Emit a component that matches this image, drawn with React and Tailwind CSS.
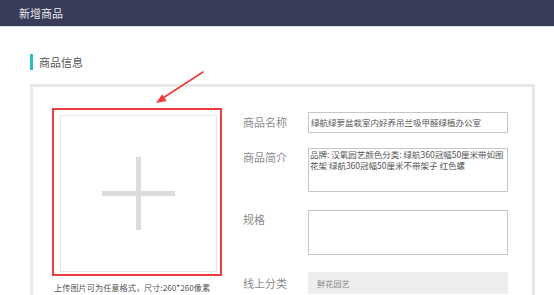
import React from "react";

const font = "font-['Noto_Sans_CJK_SC','Microsoft_YaHei',sans-serif]";

function Field({ label, children, labelLeading, className = "" }) {
  return (
    <div className={`flex items-start ${className}`}>
      <span className={`w-[65px] shrink-0 text-[11px] text-[#8c8c8c] ${labelLeading}`}>{label}</span>
      {children}
    </div>
  );
}

export default function App() {
  return (
    <div className={`relative h-[295px] overflow-hidden bg-white ${font}`}>
      <header className="flex h-[27px] items-center border-b border-[#d9dbe0] bg-[#383c58] pl-[19px] text-[11px] text-[#e8e9ee]">
        新增商品
      </header>

      <div className="px-[30px] pt-[27px]">
        <div className="flex h-[16px] items-center">
          <span className="h-[16px] w-[3px] bg-[#27bfc1]" />
          <span className="ml-[6px] text-[11px] leading-[16px] text-[#555]">商品信息</span>
        </div>

        <div className="mt-[14px] h-[240px] w-[505px] border-[3px] border-b-0 border-[#e8e8e8]">
          <div className="flex pl-[19px] pt-[21px]">
            <div className="w-[170px] shrink-0">
              <div className="h-[168px] w-[170px] border-2 border-[#f23c3c] pl-[6px] pt-[5px]">
                <div className="flex h-[157px] w-[157px] items-center justify-center border border-[#e6e6e6]">
                  <svg width="73" height="73" viewBox="0 0 73 73">
                    <rect x="0" y="34" width="73" height="5" fill="#dcdcdc" />
                    <rect x="34" y="0" width="5" height="73" fill="#dcdcdc" />
                  </svg>
                </div>
              </div>
              <p className="mt-[5px] whitespace-nowrap pl-[2px] text-[8.2px] leading-[12px] text-[#555]">
                上传图片可为任意格式，尺寸:260*260像素
              </p>
            </div>

            <div className="ml-[21px] flex flex-col pt-[4px]">
              <Field label="商品名称" labelLeading="leading-[21px]">
                <div className="h-[21px] w-[200px] whitespace-nowrap border border-[#c6c6c6] pl-[2px] text-[8.5px] leading-[19px] text-[#555]">
                  绿航绿萝盆栽室内好养吊兰吸甲醛绿植办公室
                </div>
              </Field>
              <Field label="商品简介" labelLeading="leading-[18px]" className="mt-[15px]">
                <div className="h-[44px] w-[200px] whitespace-nowrap border border-[#c6c6c6] pl-[1px] text-[8.5px] leading-[11px] text-[#555]">
                  品牌: 汉氧园艺颜色分类: 绿航360冠幅50厘米带如图
                  <br />
                  花架 绿航360冠幅50厘米不带架子 红色螺
                </div>
              </Field>
              <Field label="规格" labelLeading="leading-[18px]" className="mt-[18px]">
                <div className="h-[45px] w-[200px] border border-[#c6c6c6]" />
              </Field>
              <Field label="线上分类" labelLeading="leading-[22px]" className="mt-[17px]">
                <div className="h-[22px] w-[200px] bg-[#eeeeee] pl-[9px] text-[8.2px] leading-[22px] text-[#888]">
                  鲜花园艺
                </div>
              </Field>
            </div>
          </div>
        </div>
      </div>

      <svg className="absolute left-[150px] top-[65px]" width="60" height="45" viewBox="0 0 60 45">
        <line x1="53" y1="7" x2="13" y2="33" stroke="#f03a3a" strokeWidth="1.6" strokeLinecap="round" />
        <polygon points="6,38 16.6,35.9 12.2,29.2" fill="#f03a3a" />
      </svg>
    </div>
  );
}
